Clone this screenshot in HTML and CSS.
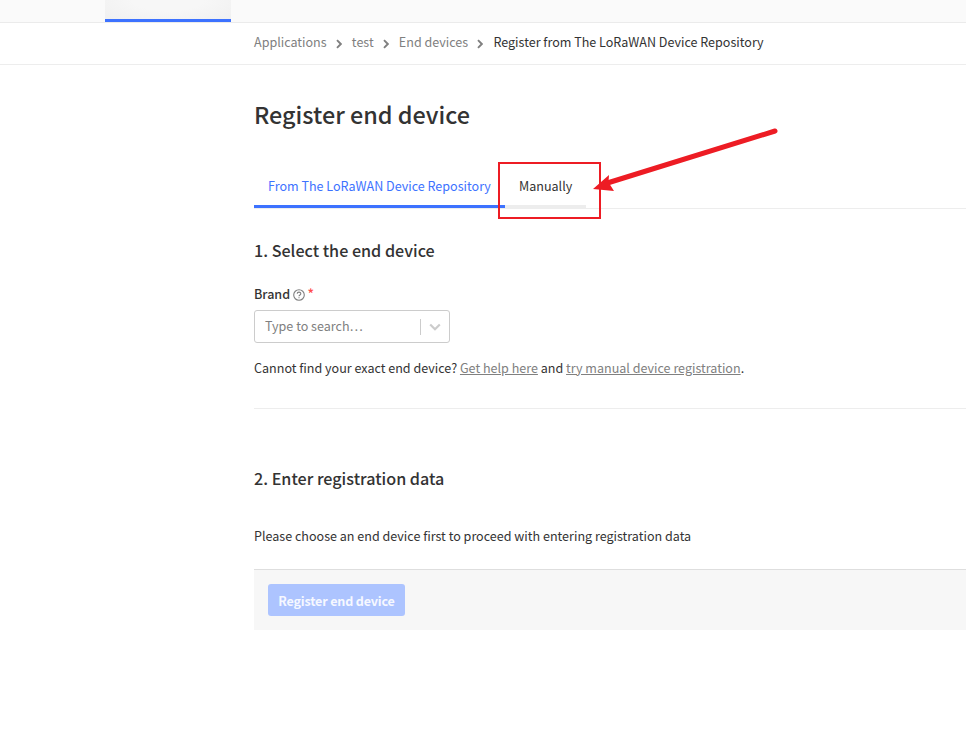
FILE: index.html
```html
<!DOCTYPE html>
<html lang="en">
<head>
<meta charset="utf-8">
<title>Register end device</title>
<link rel="stylesheet" href="styles.css">
</head>
<body>
<header class="topbar"><div class="topbar-active"></div></header>
<nav class="breadcrumbs">
  <a>Applications</a>
  <svg class="chev" viewBox="0 0 6 10"><path d="M1 1.2 4.8 5 1 8.8"/></svg>
  <a>test</a>
  <svg class="chev" viewBox="0 0 6 10"><path d="M1 1.2 4.8 5 1 8.8"/></svg>
  <a>End devices</a>
  <svg class="chev" viewBox="0 0 6 10"><path d="M1 1.2 4.8 5 1 8.8"/></svg>
  <span>Register from The LoRaWAN Device Repository</span>
</nav>
<main>
  <h1>Register end device</h1>
  <div class="tabs">
    <div class="tab active"><span>From The LoRaWAN Device Repository</span></div>
    <div class="tab"><span>Manually</span>
      <div class="highlight"></div>
      <svg class="arrow" viewBox="0 0 190 70"><path class="shaft" d="M184 6 18 57.5"/><path class="head" d="M2 64 18 50 17.5 57.3 23 66Z"/></svg>
    </div>
  </div>
  <h2>1. Select the end device</h2>
  <div class="label"><span>Brand</span>
    <svg class="help" viewBox="0 0 12 12"><circle cx="6" cy="6" r="5.3"/><path d="M4.2 4.8C4.2 2.6 7.8 2.6 7.8 4.7 7.8 6 6 5.9 6 7.2M6 8.2V9.3"/></svg>
    <span class="required">*</span>
  </div>
  <div class="select"><span>Type to search…</span><i></i>
    <svg viewBox="0 0 12 8"><path d="M1.2 1.5 6 6.2 10.8 1.5"/></svg>
  </div>
  <p class="hint">Cannot find your exact end device? <a>Get help here</a> and <a>try manual device registration</a>.</p>
  <hr>
  <h2 class="second">2. Enter registration data</h2>
  <p class="notice">Please choose an end device first to proceed with entering registration data</p>
  <div class="submit"><button disabled>Register end device</button></div>
</main>
</body>
</html>
```
FILE: styles.css
```css
* { box-sizing: border-box; }
body {
  margin: 0;
  overflow: hidden;
  background: #fff;
  color: #333;
  font: 12.55px/20px "Noto Sans CJK SC", sans-serif;
  white-space: nowrap;
}
.topbar {
  height: 23px;
  padding-left: 105px;
  background: #fafafa;
  border-bottom: 1px solid #ebebeb;
}
.topbar-active {
  width: 126px;
  height: 22px;
  background: radial-gradient(ellipse at 50% 0, #f7f7f7 40%, #f0f0f0);
  border-bottom: 3px solid #3d72ff;
}
.breadcrumbs {
  display: flex;
  align-items: center;
  height: 42px;
  padding: 0 0 3px 254px;
  border-bottom: 1px solid #ededed;
}
.breadcrumbs a { color: #808080; }
.chev {
  width: 6px;
  height: 10px;
  margin: 3px 10px 0 9.2px;
  fill: none;
  stroke: #808080;
  stroke-width: 1.9;
}
main { padding-left: 254px; }
h1 {
  margin: 34px 0 0;
  font-size: 23.4px;
  line-height: 30px;
  font-weight: 500;
}
.tabs {
  display: flex;
  height: 44px;
  margin-top: 36px;
  border-bottom: 1px solid #ededed;
}
.tab {
  position: relative;
  width: 81px;
  height: 43px;
  padding: 11px 0 0 14px;
  border-bottom: 3px solid #ededed;
}
.tab.active { width: 251px; color: #3d72ff; border-color: #3d72ff; }
.highlight {
  position: absolute;
  left: -7px;
  top: -3px;
  width: 103px;
  height: 57px;
  border: 2px solid #ed1c24;
}
.arrow {
  position: absolute;
  left: 86px;
  top: -40px;
  width: 190px;
  height: 70px;
}
.shaft { stroke: #ed1c24; stroke-width: 5; stroke-linecap: round; }
.head { fill: #ed1c24; }
h2 {
  margin: 29px 0 0;
  font-size: 16.15px;
  line-height: 24px;
  font-weight: 500;
}
.label { display: flex; height: 20px; margin-top: 22px; font-weight: 500; }
.help {
  width: 12px;
  height: 12px;
  margin: 5px 3px 0 2.5px;
  fill: none;
  stroke: #808080;
  stroke-width: 1.1;
}
.required { margin-top: -1px; color: #ff4d4d; font-size: 13.5px; }
.select {
  display: flex;
  align-items: center;
  width: 196px;
  height: 33px;
  margin-top: 6px;
  padding-left: 10px;
  border: 1px solid #ccc;
  border-radius: 3px;
  color: #808080;
}
.select span { width: 155px; padding-bottom: 2px; }
.select i { width: 1px; height: 16px; background: #ccc; }
.select svg {
  width: 12px;
  height: 8px;
  margin-left: 8px;
  fill: none;
  stroke: #ccc;
  stroke-width: 2.2;
}
p { margin: 0; }
.hint { margin-top: 15px; }
.hint a { color: #808080; text-decoration: underline; }
hr { height: 1px; margin: 30px 0 0; border: 0; background: #ededed; }
.second { margin-top: 57px; }
.notice { margin-top: 36px; }
.submit {
  height: 61px;
  margin-top: 23px;
  padding: 14px;
  background: #f7f7f7;
  border-top: 1px solid #dedede;
}
button {
  display: block;
  width: 137px;
  height: 32px;
  padding: 2px 0 0;
  border: 0;
  border-radius: 3px;
  background: #adc4ff;
  color: #f6f8ff;
  font: 700 12.55px/20px "Noto Sans CJK SC", sans-serif;
  letter-spacing: -0.17px;
}
```
